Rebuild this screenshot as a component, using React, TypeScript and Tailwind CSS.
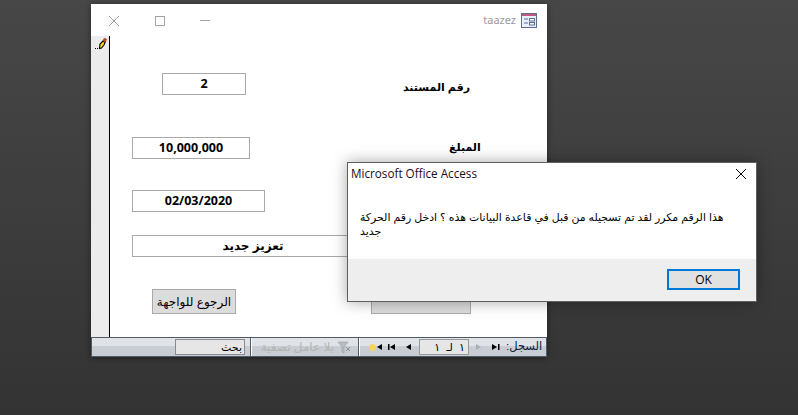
const arabic = "font-['Liberation_Sans','Noto_Sans','DejaVu_Sans',sans-serif]";

function Field({ width, children }: { width: string; children: React.ReactNode }) {
  return (
    <div className={`${width} h-[22px] shrink-0 border border-[#a9a9ad] bg-white flex items-center justify-center text-[12.5px] font-bold text-black font-['Open_Sans',sans-serif]`}>
      {children}
    </div>
  );
}

function TitleBar() {
  return (
    <div className="h-8 flex items-center shrink-0 pl-[17px] pr-[10px] pt-px">
      {/* window buttons on the left, the form is right-to-left */}
      <svg width="12" height="12" viewBox="0 0 12 12" className="shrink-0">
        <path d="M1 1l10 10M11 1L1 11" stroke="#a3a3a3" strokeWidth="1" />
      </svg>
      <div className="w-[10px] h-[10px] ml-[35px] border border-[#a3a3a3] shrink-0" />
      <div className="w-[10px] h-px ml-[35px] bg-[#a3a3a3] shrink-0" />
      <span className="ml-auto text-[11px] text-[#9a9aa2] font-['Noto_Sans',sans-serif]">taazez</span>
      <svg width="16" height="15" viewBox="0 0 16 15" className="ml-[5px] shrink-0">
        <rect x="0.5" y="0.5" width="15" height="14" fill="#e9eff8" stroke="#5b6f95" />
        <rect x="1" y="1" width="14" height="2" fill="#c2587c" />
        <path d="M3 6h4M3 10h4" stroke="#5b6f95" />
        <rect x="8.5" y="5.5" width="5" height="2.5" fill="#fff" stroke="#5b6f95" />
        <rect x="8.5" y="9.5" width="5" height="2.5" fill="#fff" stroke="#5b6f95" />
      </svg>
    </div>
  );
}

function Pencil() {
  return (
    <svg width="12" height="12" viewBox="0 0 12 12" className="ml-[4px] mt-[2px]">
      <path d="M4.500 10.500L5 6l3-3 2 1.500-1 2.500-2.500 3z" fill="#f5d90a" stroke="#000" strokeWidth="1.100" />
      <path d="M8 3l1-2.500 2.500.5-1 3.500z" fill="#c2501c" stroke="#5a2a10" strokeWidth="0.5" />
      <path d="M0 10.500h1M2 10.500h1" stroke="#000" />
    </svg>
  );
}

function FormBody() {
  return (
    <div className="flex-1 flex min-h-0">
      <div className="w-[18px] bg-[#ececec] shrink-0">
        <Pencil />
      </div>
      <div className="w-px bg-black shrink-0" />
      <div className="flex-1 pl-[22px] pt-[37px] flex flex-col">
        <div className="flex items-center h-[22px] pl-[30px]">
          <Field width="w-[84px]">2</Field>
          <span className={`${arabic} ml-[157px] mt-[6px] text-[11px] font-bold text-black whitespace-nowrap`} dir="rtl">رقم المستند</span>
        </div>
        <div className="flex items-center h-[22px] mt-[42px]">
          <Field width="w-[118px]">10,000,000</Field>
          <span className={`${arabic} ml-[199px] mb-[2px] text-[11px] font-bold text-black whitespace-nowrap`} dir="rtl">المبلغ</span>
        </div>
        <div className="mt-[31px]">
          <Field width="w-[133px]">02/03/2020</Field>
        </div>
        <div className="mt-[23px]">
          <Field width="w-[242px]">
            <span className={`${arabic} text-[12px]`} dir="rtl">تعزيز جديد</span>
          </Field>
        </div>
        <div className="mt-[32px] flex items-start pl-[20px]">
          <div className={`${arabic} w-[84px] h-[25px] border border-[#a9a9ad] bg-[#dcdcdc] flex items-center justify-center text-[12px] text-black whitespace-nowrap`} dir="rtl">
            الرجوع للواجهة
          </div>
          <div className="w-[100px] h-[25px] ml-[135px] border border-[#a9a9ad] bg-[#dcdcdc]" />
        </div>
      </div>
    </div>
  );
}

function NavIcon({ d }: { d: string }) {
  return (
    <svg width="8" height="8" viewBox="0 0 8 8" className="shrink-0">
      <path d={d} fill="#000" />
    </svg>
  );
}

function NavBar() {
  return (
    <div className="h-[20px] shrink-0 flex items-center bg-[linear-gradient(#dfe3e8_0,#dfe3e8_45%,#c8ccd3_45%,#c8ccd3_100%)] border border-[#4f5b69] pr-[2px]">
      <div className="ml-[83px] w-[70px] h-[16px] bg-[#e6e6e6] border border-[#8a8a8a] flex items-center justify-end pr-[2px] shrink-0">
        <span className={`${arabic} text-[11px] text-black`} dir="rtl">بحث</span>
      </div>
      <div className="ml-[5px] w-px h-full bg-[#4f5b69] shrink-0" />
      <div className="w-px h-full bg-white shrink-0" />
      <span className={`${arabic} ml-[10px] text-[12px] text-[#b4b4b0] w-[72px] shrink-0 whitespace-nowrap`} dir="rtl">بلا عامل تصفية</span>
      <svg width="14" height="13" viewBox="0 0 14 13" className="ml-[3px] shrink-0">
        <path d="M1 1h10L7 6v6L5 11V6z" fill="#b9bcc0" stroke="#9a9da0" strokeWidth="0.6" />
        <path d="M9 6l4 4M13 6l-4 4" stroke="#8d9094" />
      </svg>
      <div className="ml-[7px] w-px h-full bg-[#4f5b69] shrink-0" />
      <div className="w-px h-full bg-white shrink-0" />
      <div className="ml-[9px] w-[15px] flex items-center shrink-0">
        <span className="w-[7px] h-[7px] rounded-full bg-[#f5d65a] shrink-0" />
        <NavIcon d="M6 1v6L1 4z" />
      </div>
      <div className="ml-[4px]"><NavIcon d="M0 1h1.500v6H0zM7 1v6L2 4z" /></div>
      <div className="ml-[9px]"><NavIcon d="M6 1v6L1 4z" /></div>
      <div className="ml-[6px] w-[50px] h-[16px] bg-[#e6e6e6] border border-[#9a9a9a] flex items-center justify-end pr-[3px] shrink-0">
        <span className={`${arabic} text-[11px] text-black whitespace-pre`} dir="rtl">١  لـ  ١</span>
      </div>
      <div className="ml-[5px]">
        <svg width="8" height="8" viewBox="0 0 8 8"><path d="M2 1v6l5-3z" fill="#a9adb3" /></svg>
      </div>
      <div className="ml-[10px]"><NavIcon d="M0 1v6l5-3zM6 1h1.500v6H6z" /></div>
      <span className={`${arabic} ml-[6px] text-[11.5px] text-[#10203a] whitespace-nowrap`} dir="rtl">السجل:</span>
    </div>
  );
}

function Dialog() {
  return (
    <div className="absolute left-[347px] top-[162px] w-[410px] h-[140px] bg-white border border-[#5f5f5f] shadow-[0_0_14px_rgba(0,0,0,0.35)] flex flex-col">
      <div className="h-[22px] flex items-center justify-between pl-[3px] pr-[9px] shrink-0">
        <span className="text-[11.7px] text-[#1c0a1c] font-['Open_Sans',sans-serif]">Microsoft Office Access</span>
        <svg width="12" height="12" viewBox="0 0 12 12" className="shrink-0">
          <path d="M1 1l10 10M11 1L1 11" stroke="#000" strokeWidth="1" />
        </svg>
      </div>
      <div className={`${arabic} flex-1 pr-[30px] pl-[12px] pt-[25px] text-[10.9px] leading-[14px] text-black text-left`} dir="rtl">
        هذا الرقم مكرر لقد تم تسجيله من قبل في قاعدة البيانات هذه ؟ ادخل رقم الحركة جديد
      </div>
      <div className="h-[42px] bg-[#eeeeee] flex items-start justify-end pt-[10px] pr-[16px] shrink-0">
        <div className="w-[73px] h-[21px] border-2 border-[#0078d7] bg-[#e1e1e1] flex items-center justify-center text-[12px] text-black font-['Open_Sans',sans-serif]">
          OK
        </div>
      </div>
    </div>
  );
}

export default function App() {
  return (
    <div className="relative w-[798px] h-[415px] overflow-hidden bg-[linear-gradient(#474747,#363636_85%,#333333)]">
      <div className="absolute left-[91px] top-[4px] w-[456px] h-[353px] bg-white shadow-[0_1px_6px_rgba(0,0,0,0.45)] flex flex-col">
        <TitleBar />
        <FormBody />
        <NavBar />
      </div>
      <Dialog />
    </div>
  );
}
